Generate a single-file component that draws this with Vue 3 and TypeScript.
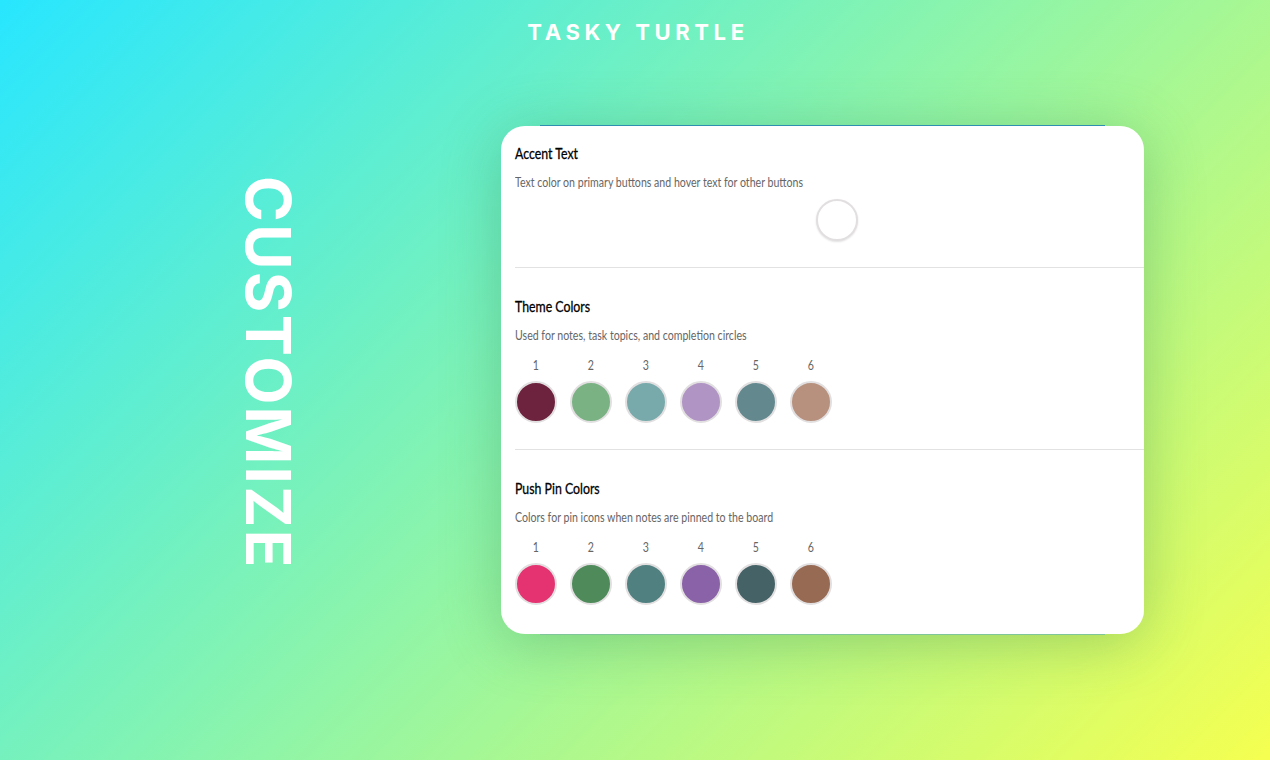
<script setup lang="ts">
type ColorGroup = {
  title: string
  description: string
  colors: string[]
}

const groups: ColorGroup[] = [
  {
    title: 'Theme Colors',
    description: 'Used for notes, task topics, and completion circles',
    colors: ['#6d233d', '#7bb284', '#78aaab', '#b094c4', '#63898f', '#b7917e']
  },
  {
    title: 'Push Pin Colors',
    description: 'Colors for pin icons when notes are pinned to the board',
    colors: ['#e53371', '#4f8a5b', '#518080', '#8a62a8', '#456266', '#976a53']
  }
]
</script>

<template>
  <div class="page">
    <header class="brand">TASKY TURTLE</header>
    <main class="main">
      <div class="side">
        <h1 class="side__title">CUSTOMIZE</h1>
      </div>
      <section class="card">
        <div class="card__body">
          <div class="group group--accent">
            <h2 class="group__title">Accent Text</h2>
            <p class="group__desc">Text color on primary buttons and hover text for other buttons</p>
            <div class="group__accent">
              <span class="swatch swatch--white"></span>
            </div>
          </div>
          <div v-for="group in groups" :key="group.title" class="group">
            <h2 class="group__title">{{ group.title }}</h2>
            <p class="group__desc">{{ group.description }}</p>
            <div class="swatches">
              <div v-for="(color, index) in group.colors" :key="color" class="swatches__item">
                <span class="swatches__num">{{ index + 1 }}</span>
                <span class="swatch" :style="{ backgroundColor: color }"></span>
              </div>
            </div>
          </div>
        </div>
      </section>
    </main>
  </div>
</template>

<style>
html,
body {
  margin: 0;
  overflow: hidden;
}
</style>

<style scoped>
.page {
  width: 1270px;
  height: 760px;
  overflow: hidden;
  background: linear-gradient(135deg, #28e6ff 0%, #8ff5a8 50%, #f5ff50 100%);
}

.brand {
  height: 66px;
  line-height: 65px;
  padding-left: 6px;
  text-align: center;
  color: #fff;
  font-family: Inter, sans-serif;
  font-size: 22px;
  font-weight: 700;
  letter-spacing: 4.6px;
}

.main {
  display: flex;
  align-items: flex-start;
  padding-top: 60px;
}

.side {
  width: 501px;
  padding: 50px 0 0 34px;
  box-sizing: border-box;
  display: flex;
  justify-content: center;
}

.side__title {
  margin: 0;
  writing-mode: vertical-rl;
  color: #fff;
  font-family: Inter, sans-serif;
  font-size: 62px;
  line-height: 62px;
  font-weight: 700;
  letter-spacing: 2.3px;
}

.card {
  position: relative;
  width: 643px;
  height: 508px;
  border-radius: 24px;
  box-shadow: 0 8px 60px rgba(30, 110, 70, 0.3);
}

.card::before,
.card::after {
  content: "";
  position: absolute;
  left: 39px;
  right: 39px;
  height: 1px;
}

.card::before {
  top: -1px;
  background: #2f8fb0;
}

.card::after {
  bottom: -1px;
  background: #7fc79a;
}

.card__body {
  height: 100%;
  box-sizing: border-box;
  padding-left: 14px;
  background: #fff;
  border-radius: 24px;
  overflow: hidden;
  font-family: Lato, sans-serif;
}

.group {
  width: 643px;
  height: 182px;
  box-sizing: border-box;
  border-bottom: 1px solid #e2e2e2;
  padding-top: 29px;
}

.group--accent {
  height: 142px;
  padding-top: 18px;
}

.group:last-child {
  border-bottom: 0;
}

.group__title {
  margin: 0;
  height: 18px;
  line-height: 18px;
  font-size: 16px;
  font-weight: 400;
  color: #000;
  -webkit-text-stroke: 0.3px #000;
  transform: scaleX(0.77);
  transform-origin: left center;
  white-space: nowrap;
}

.group__desc {
  margin: 12px 0 0;
  height: 16px;
  line-height: 16px;
  font-size: 13px;
  color: #666;
  transform: scaleX(0.815);
  transform-origin: left center;
  white-space: nowrap;
}

.group__accent {
  display: flex;
  justify-content: center;
  margin-top: 9px;
}

.swatches {
  display: flex;
  gap: 13px;
  margin-top: 14px;
}

.swatches__item {
  display: flex;
  flex-direction: column;
  align-items: center;
  gap: 8px;
}

.swatches__num {
  height: 16px;
  line-height: 16px;
  font-size: 13px;
  color: #666;
  transform: scaleX(0.815);
}

.swatch {
  display: block;
  width: 42px;
  height: 42px;
  box-sizing: border-box;
  border: 2px solid #e2dfe0;
  border-radius: 50%;
}

.swatch--white {
  background: #fff;
  box-shadow: 0 1px 2px rgba(0, 0, 0, 0.12);
}
</style>
